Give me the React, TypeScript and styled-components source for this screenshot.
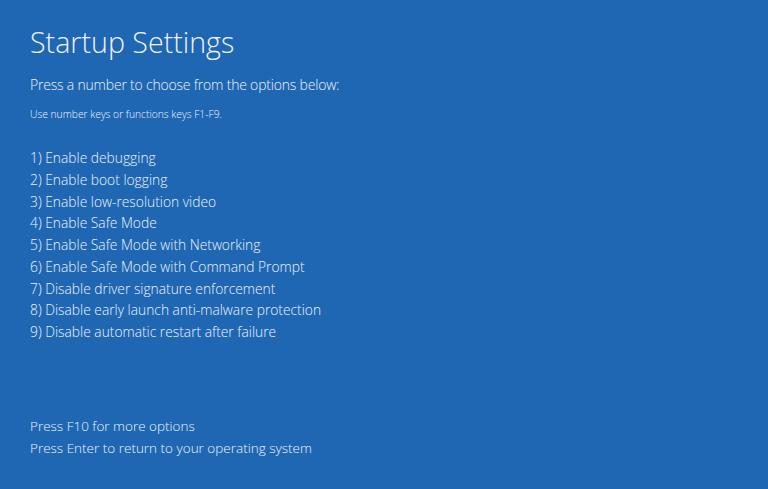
import styled, { createGlobalStyle } from "styled-components";

const GlobalStyle = createGlobalStyle`
  html, body {
    margin: 0;
    padding: 0;
    background: #2067b3;
  }
  body {
    font-family: "Open Sans", "Noto Sans", "Liberation Sans", sans-serif;
  }
`;

const Screen = styled.div`
  box-sizing: border-box;
  width: 768px;
  height: 489px;
  padding: 25px 0 0 30px;
  background: #2067b3;
  color: #eef3fa;
  display: flex;
  flex-direction: column;
  overflow: hidden;
`;

const Title = styled.h1`
  margin: 0;
  font-size: 28.6px;
  line-height: 34px;
  font-weight: 300;
`;

const Prompt = styled.div`
  margin-top: 16px;
  font-size: 14px;
  letter-spacing: -0.2px;
  line-height: 20px;
  font-weight: 300;
`;

const Hint = styled.div`
  margin-top: 12px;
  font-size: 10.3px;
  line-height: 14px;
  font-weight: 300;
`;

const OptionList = styled.ol`
  list-style: none;
  margin: 26px 0 0;
  padding: 0;
`;

const Option = styled.li`
  font-size: 13.8px;
  line-height: 21.75px;
  font-weight: 300;
`;

const Footer = styled.div`
  margin-top: auto;
  margin-bottom: 30px;
`;

const FooterLine = styled.div`
  font-size: 13.5px;
  line-height: 22px;
  font-weight: 300;
`;

const options = [
  "Enable debugging",
  "Enable boot logging",
  "Enable low-resolution video",
  "Enable Safe Mode",
  "Enable Safe Mode with Networking",
  "Enable Safe Mode with Command Prompt",
  "Disable driver signature enforcement",
  "Disable early launch anti-malware protection",
  "Disable automatic restart after failure",
];

const App = () => {
  return (
    <>
      <GlobalStyle />
      <Screen>
        <Title>Startup Settings</Title>
        <Prompt>Press a number to choose from the options below:</Prompt>
        <Hint>Use number keys or functions keys F1-F9.</Hint>
        <OptionList>
          {options.map((text, i) => (
            <Option key={text}>
              {i + 1}) {text}
            </Option>
          ))}
        </OptionList>
        <Footer>
          <FooterLine>Press F10 for more options</FooterLine>
          <FooterLine>Press Enter to return to your operating system</FooterLine>
        </Footer>
      </Screen>
    </>
  );
};

export default App;
